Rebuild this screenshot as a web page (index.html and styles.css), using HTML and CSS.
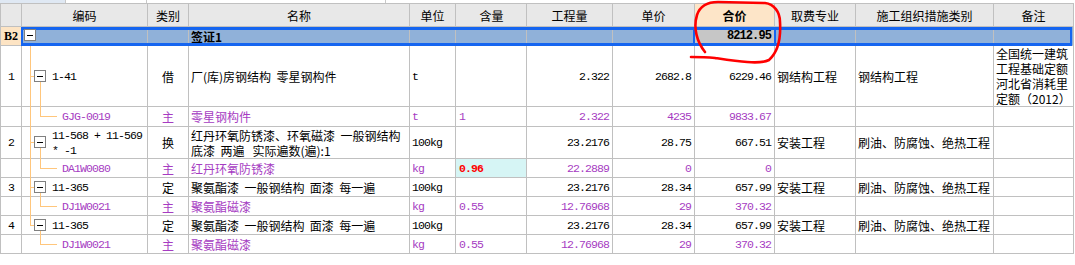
FILE: index.html
```html
<!DOCTYPE html>
<html>
<head>
<meta charset="utf-8">
<link rel="stylesheet" href="styles.css">
</head>
<body>
<div class="page">
  <div class="strip"><span class="s1"></span><span class="s2"></span><span class="s3"></span><span class="s4"></span></div>
  <div class="grid">
    <div class="row head">
      <div class="c"></div>
      <div class="c ctr">编码</div>
      <div class="c ctr">类别</div>
      <div class="c ctr">名称</div>
      <div class="c ctr">单位</div>
      <div class="c ctr">含量</div>
      <div class="c ctr">工程量</div>
      <div class="c ctr">单价</div>
      <div class="c ctr hot">合价</div>
      <div class="c ctr">取费专业</div>
      <div class="c ctr">施工组织措施类别</div>
      <div class="c ctr">备注</div>
    </div>

    <div class="row h19 sel-row">
      <div class="c ctr idx-b">B2</div>
      <div class="c"></div>
      <div class="c"></div>
      <div class="c bold">签证1</div>
      <div class="c"></div>
      <div class="c"></div>
      <div class="c"></div>
      <div class="c"></div>
      <div class="c num r selcell bold">8212.95</div>
      <div class="c"></div>
      <div class="c"></div>
      <div class="c"></div>
    </div>

    <div class="row h61">
      <div class="c ctr num">1</div>
      <div class="c num code">1-41</div>
      <div class="c ctr">借</div>
      <div class="c">厂(库)房钢结构&nbsp; 零星钢构件</div>
      <div class="c num">t</div>
      <div class="c"></div>
      <div class="c num r">2.322</div>
      <div class="c num r">2682.8</div>
      <div class="c num r">6229.46</div>
      <div class="c">钢结构工程</div>
      <div class="c">钢结构工程</div>
      <div class="c multi">全国统一建筑<br>工程基础定额<br>河北省消耗里<br>定额（2012）</div>
    </div>

    <div class="row h20 sub">
      <div class="c"></div>
      <div class="c num child">GJG-0019</div>
      <div class="c ctr">主</div>
      <div class="c">零星钢构件</div>
      <div class="c num">t</div>
      <div class="c num">1</div>
      <div class="c num r">2.322</div>
      <div class="c num r">4235</div>
      <div class="c num r">9833.67</div>
      <div class="c"></div>
      <div class="c"></div>
      <div class="c"></div>
    </div>

    <div class="row h32">
      <div class="c ctr num">2</div>
      <div class="c num code two">11-568 + 11-569<br>* -1</div>
      <div class="c ctr">换</div>
      <div class="c two">红丹环氧防锈漆、环氧磁漆  一般钢结构<br>底漆  两遍   实际遍数(遍):1</div>
      <div class="c num">100kg</div>
      <div class="c"></div>
      <div class="c num r">23.2176</div>
      <div class="c num r">28.75</div>
      <div class="c num r">667.51</div>
      <div class="c">安装工程</div>
      <div class="c">刷油、防腐蚀、绝热工程</div>
      <div class="c"></div>
    </div>

    <div class="row h19 sub">
      <div class="c"></div>
      <div class="c num child">DA1W0080</div>
      <div class="c ctr">主</div>
      <div class="c">红丹环氧防锈漆</div>
      <div class="c num">kg</div>
      <div class="c num warn">0.96</div>
      <div class="c num r">22.2889</div>
      <div class="c num r">0</div>
      <div class="c num r">0</div>
      <div class="c"></div>
      <div class="c"></div>
      <div class="c"></div>
    </div>

    <div class="row h19">
      <div class="c ctr num">3</div>
      <div class="c num code">11-365</div>
      <div class="c ctr">定</div>
      <div class="c">聚氨酯漆&nbsp; 一般钢结构&nbsp; 面漆&nbsp; 每一遍</div>
      <div class="c num">100kg</div>
      <div class="c"></div>
      <div class="c num r">23.2176</div>
      <div class="c num r">28.34</div>
      <div class="c num r">657.99</div>
      <div class="c">安装工程</div>
      <div class="c">刷油、防腐蚀、绝热工程</div>
      <div class="c"></div>
    </div>

    <div class="row h19 sub">
      <div class="c"></div>
      <div class="c num child">DJ1W0021</div>
      <div class="c ctr">主</div>
      <div class="c">聚氨酯磁漆</div>
      <div class="c num">kg</div>
      <div class="c num">0.55</div>
      <div class="c num r">12.76968</div>
      <div class="c num r">29</div>
      <div class="c num r">370.32</div>
      <div class="c"></div>
      <div class="c"></div>
      <div class="c"></div>
    </div>

    <div class="row h19">
      <div class="c ctr num">4</div>
      <div class="c num code">11-365</div>
      <div class="c ctr">定</div>
      <div class="c">聚氨酯漆&nbsp; 一般钢结构&nbsp; 面漆&nbsp; 每一遍</div>
      <div class="c num">100kg</div>
      <div class="c"></div>
      <div class="c num r">23.2176</div>
      <div class="c num r">28.34</div>
      <div class="c num r">657.99</div>
      <div class="c">安装工程</div>
      <div class="c">刷油、防腐蚀、绝热工程</div>
      <div class="c"></div>
    </div>

    <div class="row h19 sub">
      <div class="c"></div>
      <div class="c num child">DJ1W0021</div>
      <div class="c ctr">主</div>
      <div class="c">聚氨酯磁漆</div>
      <div class="c num">kg</div>
      <div class="c num">0.55</div>
      <div class="c num r">12.76968</div>
      <div class="c num r">29</div>
      <div class="c num r">370.32</div>
      <div class="c"></div>
      <div class="c"></div>
      <div class="c"></div>
    </div>
  </div>

  <svg class="overlay" width="1075" height="265" viewBox="0 0 1075 265">
    <g stroke="#ffc67c" stroke-width="1" fill="none" shape-rendering="crispEdges">
      <path d="M30.5 46 V225.5 M30.5 76.5 H34 M30.5 142.5 H34 M30.5 187.5 H34 M30.5 225.5 H34"/>
      <path d="M40.5 82 V116.5 H57"/>
      <path d="M40.5 148 V168.5 H57"/>
      <path d="M40.5 193 V206.5 H57"/>
      <path d="M40.5 231 V244.5 H57"/>
    </g>
    <g shape-rendering="crispEdges">
      <rect x="24.5" y="29.5" width="11" height="11" fill="#fff" stroke="#808080"/>
      <path d="M27 35.5 H33" stroke="#000"/>
      <rect x="34.5" y="70.5" width="11" height="11" fill="#fff" stroke="#808080"/>
      <path d="M37 76.5 H43" stroke="#000"/>
      <rect x="34.5" y="136.5" width="11" height="11" fill="#fff" stroke="#808080"/>
      <path d="M37 142.5 H43" stroke="#000"/>
      <rect x="34.5" y="181.5" width="11" height="11" fill="#fff" stroke="#808080"/>
      <path d="M37 187.5 H43" stroke="#000"/>
      <rect x="34.5" y="219.5" width="11" height="11" fill="#fff" stroke="#808080"/>
      <path d="M37 225.5 H43" stroke="#000"/>
    </g>
    <path d="M705 52 C697 42, 693 28, 697 15 C700 6, 708 2, 718 2 L765 3 C774 4, 780 12, 780 22 C781 38, 778 52, 769 60 C760 65, 735 61, 715 58 C705 57, 697 57, 691 57" fill="none" stroke="#ff0000" stroke-width="2.6" stroke-linecap="round" stroke-linejoin="round"/>
  </svg>
</div>
</body>
</html>
```

FILE: styles.css
```css
* { box-sizing: border-box; }
html, body { margin: 0; padding: 0; background: #fff; }
body { width: 1075px; height: 265px; overflow: hidden; }

.page {
  position: relative;
  width: 1075px;
  height: 265px;
  font-family: "Noto Sans CJK SC", "Noto Sans", sans-serif;
  font-size: 12px;
  color: #000;
}

.strip {
  display: flex;
  height: 3px;
}
.strip span { height: 3px; border-right: 1px solid #c8c8c8; }
.strip .s1 { width: 66px; background: #dfe8f3; }
.strip .s2 { width: 81px; background: #fff; }
.strip .s3 { width: 239px; background: #fff; }
.strip .s4 { flex: 1; border-right: none; background: #fff; }

.grid {
  width: 1074px;
  border-left: 1px solid #c0c0c0;
  border-top: 1px solid #c0c0c0;
}

.row {
  display: grid;
  grid-template-columns: 21px 126px 41px 221px 46px 71px 86px 82px 80px 81px 138px 80px;
  height: 19px;
  position: relative;
}
.row.head { height: 23px; background: #e8e8e8; }
.row.h19 { height: 19px; }
.row.h20 { height: 20px; }
.row.h32 { height: 32px; }
.row.h61 { height: 61px; }

.c {
  border-right: 1px solid #c0c0c0;
  border-bottom: 1px solid #c0c0c0;
  display: flex;
  align-items: center;
  padding: 0 2px;
  white-space: nowrap;
  overflow: hidden;
  line-height: 15px;
}
.c.ctr { justify-content: center; }
.c.r { justify-content: flex-end; padding-right: 3px; }
.c.num {
  font-family: "Liberation Mono", "DejaVu Sans Mono", monospace;
  font-size: 11.5px;
  letter-spacing: -0.9px;
}
.c.bold { font-weight: bold; }
.c.code { padding-left: 30px; }
.c.child { padding-left: 40px; }
.c.two { white-space: pre; line-height: 15px; }
.c.multi { white-space: normal; line-height: 15px; padding-left: 2px; }

.head .hot { background: #fde5c8; font-weight: bold; }

.sub .c { color: #a63cc2; }
.sub .c.warn {
  background: #d6f5f5;
  color: #ff0000;
  font-weight: bold;
}
.row .c:nth-child(6) { padding-left: 3px; }

.sel-row .c { background: #90b1d9; }
.sel-row .c.idx-b {
  background: #fde4c4;
  font-family: "Liberation Serif", serif;
  font-weight: bold;
  font-size: 12px;
}
.sel-row .c.selcell {
  background: #c6c6c6;
  position: relative;
  overflow: visible;
  font-size: 12px;
}
.sel-row .c.selcell::after {
  content: "";
  position: absolute;
  left: -2px;
  right: -2px;
  top: 0;
  bottom: -1px;
  border-left: 2px solid #1565f0;
  border-right: 2px solid #1565f0;
}
.sel-row::after {
  content: "";
  position: absolute;
  left: 20px;
  right: 2px;
  top: 0;
  bottom: 0;
  border: 3px solid #1565f0;
  border-left-width: 2px;
  border-right-width: 2px;
  pointer-events: none;
}

.overlay {
  position: absolute;
  left: 0;
  top: 0;
  pointer-events: none;
}
```
